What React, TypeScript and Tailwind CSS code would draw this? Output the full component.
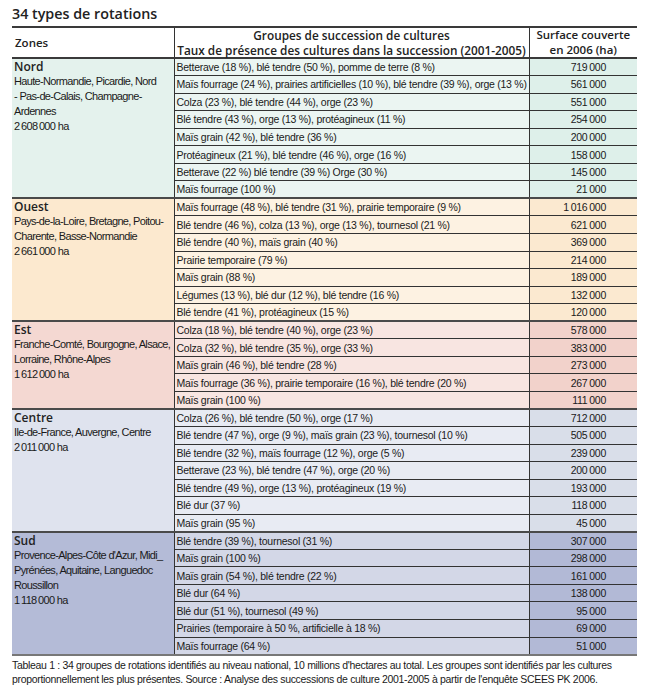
import React from 'react';

type Zone = {
    name: string;
    lines: string[];
    total: string;
    zoneBg: string;
    cellBg: string;
    numBg: string;
    rows: [string, string][];
};

// Narrow space used as thousands separator
const s = '\u2009';

const zones: Zone[] = [
    {
        name: 'Nord',
        lines: ['Haute-Normandie, Picardie, Nord', '- Pas-de-Calais, Champagne-', 'Ardennes'],
        total: `2${s}608${s}000 ha`,
        zoneBg: 'bg-[#e4f2ed]',
        cellBg: 'bg-[#ebf5f2]',
        numBg: 'bg-[#def0ea]',
        rows: [
            ['Betterave (18 %), blé tendre (50 %), pomme de terre (8 %)', `719${s}000`],
            ['Maïs fourrage (24 %), prairies artificielles (10 %), blé tendre (39 %), orge (13 %)', `561${s}000`],
            ['Colza (23 %), blé tendre (44 %), orge (23 %)', `551${s}000`],
            ['Blé tendre (43 %), orge (13 %), protéagineux (11 %)', `254${s}000`],
            ['Maïs grain (42 %), blé tendre (36 %)', `200${s}000`],
            ['Protéagineux (21 %), blé tendre (46 %), orge (16 %)', `158${s}000`],
            ['Betterave (22 %) blé tendre (39 %) Orge (30 %)', `145${s}000`],
            ['Maïs fourrage (100 %)', `21${s}000`],
        ],
    },
    {
        name: 'Ouest',
        lines: ['Pays-de-la-Loire, Bretagne, Poitou-', 'Charente, Basse-Normandie'],
        total: `2${s}661${s}000 ha`,
        zoneBg: 'bg-[#fce9cf]',
        cellBg: 'bg-[#fdf2e2]',
        numBg: 'bg-[#fbe9d0]',
        rows: [
            ['Maïs fourrage (48 %), blé tendre (31 %), prairie temporaire (9 %)', `1${s}016${s}000`],
            ['Blé tendre (46 %), colza (13 %), orge (13 %), tournesol (21 %)', `621${s}000`],
            ['Blé tendre (40 %), maïs grain (40 %)', `369${s}000`],
            ['Prairie temporaire (79 %)', `214${s}000`],
            ['Maïs grain (88 %)', `189${s}000`],
            ['Légumes (13 %), blé dur (12 %), blé tendre (16 %)', `132${s}000`],
            ['Blé tendre (41 %), protéagineux (15 %)', `120${s}000`],
        ],
    },
    {
        name: 'Est',
        lines: ['Franche-Comté, Bourgogne, Alsace,', 'Lorraine, Rhône-Alpes'],
        total: `1${s}612${s}000 ha`,
        zoneBg: 'bg-[#f4d8d2]',
        cellBg: 'bg-[#f8e5e1]',
        numBg: 'bg-[#f2d2cb]',
        rows: [
            ['Colza (18 %), blé tendre (40 %), orge (23 %)', `578${s}000`],
            ['Colza (32 %), blé tendre (35 %), orge (33 %)', `383${s}000`],
            ['Maïs grain (46 %), blé tendre (28 %)', `273${s}000`],
            ['Maïs fourrage (36 %), prairie temporaire (16 %), blé tendre (20 %)', `267${s}000`],
            ['Maïs grain (100 %)', `111${s}000`],
        ],
    },
    {
        name: 'Centre',
        lines: ['Ile-de-France, Auvergne, Centre'],
        total: `2${s}011${s}000 ha`,
        zoneBg: 'bg-[#dfe3ee]',
        cellBg: 'bg-[#e8ebf3]',
        numBg: 'bg-[#d9dee9]',
        rows: [
            ['Colza (26 %), blé tendre (50 %), orge (17 %)', `712${s}000`],
            ['Blé tendre (47 %), orge (9 %), maïs grain (23 %), tournesol (10 %)', `505${s}000`],
            ['Blé tendre (32 %), maïs fourrage (12 %), orge (5 %)', `239${s}000`],
            ['Betterave (23 %), blé tendre (47 %), orge (20 %)', `200${s}000`],
            ['Blé tendre (49 %), orge (13 %), protéagineux (19 %)', `193${s}000`],
            ['Blé dur (37 %)', `118${s}000`],
            ['Maïs grain (95 %)', `45${s}000`],
        ],
    },
    {
        name: 'Sud',
        lines: ["Provence-Alpes-Côte d'Azur, Midi_", 'Pyrénées, Aquitaine, Languedoc', 'Roussillon'],
        total: `1${s}118${s}000 ha`,
        zoneBg: 'bg-[#b4bbd7]',
        cellBg: 'bg-[#d3d7e7]',
        numBg: 'bg-[#b2b9d6]',
        rows: [
            ['Blé tendre (39 %), tournesol (31 %)', `307${s}000`],
            ['Maïs grain (100 %)', `298${s}000`],
            ['Maïs grain (54 %), blé tendre (22 %)', `161${s}000`],
            ['Blé dur (64 %)', `138${s}000`],
            ['Blé dur (51 %), tournesol (49 %)', `95${s}000`],
            ['Prairies (temporaire à 50 %, artificielle à 18 %)', `69${s}000`],
            ['Maïs fourrage (64 %)', `51${s}000`],
        ],
    },
];

const cellFont = "font-['Liberation_Sans',Arial,sans-serif] text-[10.5px] tracking-[-0.26px] text-[#1a1a1a]";
const headFont = "font-['Open_Sans',sans-serif] font-semibold text-[#222]";

const App: React.FC = () => {
    return (
        <div className="w-[653px] h-[695px] bg-white pl-[12px] pr-[16px] pt-[4px]">
            <h1 className={`${headFont} text-[14.3px] font-bold leading-[20px] h-[22px]`}>34 types de rotations</h1>

            <table className="w-[625px] border-collapse table-fixed">
                <colgroup>
                    <col className="w-[162px]" />
                    <col className="w-[355px]" />
                    <col className="w-[108px]" />
                </colgroup>
                <thead>
                    <tr className="border-t-2 border-b-2 border-[#3a3a3a] h-[30px]">
                        <th className={`${headFont} text-[11.5px] text-left font-semibold pl-[3px] align-middle`}>Zones</th>
                        <th className={`${headFont} text-[11.8px] font-semibold leading-[14.5px] text-center border-l border-r border-[#333] whitespace-nowrap`}>
                            <div>Groupes de succession de cultures</div>
                            <div>Taux de présence des cultures dans la succession (2001-2005)</div>
                        </th>
                        <th className={`${headFont} text-[11.5px] font-semibold leading-[14.5px] text-center whitespace-nowrap`}>
                            <div>Surface couverte</div>
                            <div>en 2006 (ha)</div>
                        </th>
                    </tr>
                </thead>
                <tbody>
                    {zones.map((zone) =>
                        zone.rows.map(([text, value], i) => (
                            <tr
                                key={`${zone.name}-${i}`}
                                className={`h-[17.55px] ${i === 0 ? 'border-t-2 border-[#4a4a4a]' : ''}`}
                            >
                                {i === 0 && (
                                    <td
                                        rowSpan={zone.rows.length}
                                        className={`${zone.zoneBg} align-top pl-[2px] pt-[1px]`}
                                    >
                                        <div className={`${headFont} text-[12px] leading-[14px]`}>{zone.name}</div>
                                        <div className={`${cellFont} text-[11px] tracking-[-0.66px] leading-[15px]`}>
                                            {zone.lines.map((line) => (
                                                <div key={line} className="whitespace-nowrap">{line}</div>
                                            ))}
                                            <div className="whitespace-nowrap">{zone.total}</div>
                                        </div>
                                    </td>
                                )}
                                <td
                                    className={`${zone.cellBg} ${cellFont} pl-[2px] leading-[16px] whitespace-nowrap border-l border-r border-[#333] ${i > 0 ? 'border-t border-t-[#333]' : ''}`}
                                >
                                    {text}
                                </td>
                                <td
                                    className={`${zone.numBg} ${cellFont} text-right pr-[31px] leading-[16px] whitespace-nowrap ${i > 0 ? 'border-t border-t-[#333]' : ''}`}
                                >
                                    {value}
                                </td>
                            </tr>
                        ))
                    )}
                    <tr className="border-t-2 border-[#777]">
                        <td colSpan={3} className="h-0 p-0"></td>
                    </tr>
                </tbody>
            </table>

            <p className={`${cellFont} tracking-[-0.32px] leading-[14px] mt-[2px] w-[640px] whitespace-nowrap`}>
                Tableau 1 : 34 groupes de rotations identifiés au niveau national, 10 millions d'hectares au total. Les groupes sont identifiés par les cultures<br />
                proportionnellement les plus présentes. Source : Analyse des successions de culture 2001-2005 à partir de l'enquête SCEES PK 2006.
            </p>
        </div>
    );
};

export default App;
